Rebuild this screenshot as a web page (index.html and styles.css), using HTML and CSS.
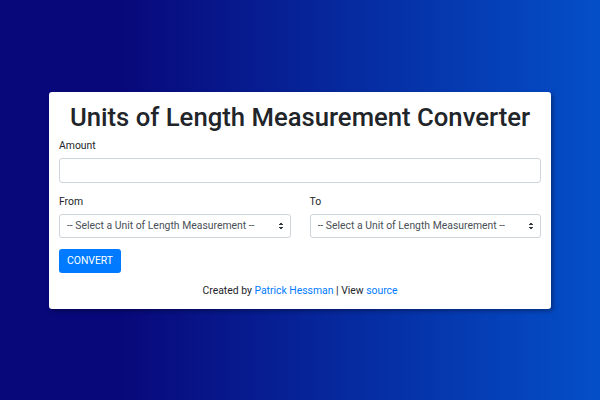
FILE: index.html
```html
<!DOCTYPE html>
<html lang="en">

<head>
    <meta charset="UTF-8">
    <meta name="viewport" content="width=device-width, initial-scale=1.0">
    <title>Units of Length Measurement Converter</title>
    <link rel="stylesheet" href="styles.css">
</head>

<body>
    <div class="card">
        <h1>Units of Length Measurement Converter</h1>
        <div class="field">
            <label for="amount">Amount</label>
            <input type="text" id="amount">
        </div>
        <div class="row">
            <div class="field">
                <label for="from">From</label>
                <div class="select-wrap">
                    <select id="from">
                        <option>-- Select a Unit of Length Measurement --</option>
                    </select>
                </div>
            </div>
            <div class="field">
                <label for="to">To</label>
                <div class="select-wrap">
                    <select id="to">
                        <option>-- Select a Unit of Length Measurement --</option>
                    </select>
                </div>
            </div>
        </div>
        <button class="convert">CONVERT</button>
        <p class="credits">Created by <a href="#">Patrick Hessman</a> | View <a href="#">source</a></p>
    </div>
</body>

</html>
```

FILE: styles.css
```css
body {
    background-image: linear-gradient(90deg, #08087a 20%, #044fc8);
    color: #212529;
    font-family: Roboto, "Liberation Sans", sans-serif;
    margin: 0;
    display: flex;
    align-items: center;
    justify-content: center;
    min-height: 100vh;
}

.card {
    width: 502px;
    box-sizing: border-box;
    background-color: #fff;
    padding: 8px 10px 10px;
    border-radius: 3px;
    box-shadow: 2px 2px 4px rgba(0, 0, 0, 0.35);
}

h1 {
    font-size: 25.7px;
    font-weight: 500;
    text-align: center;
    margin: 0 0 2px;
    line-height: 35px;
}

.field {
    display: flex;
    flex-direction: column;
    margin-bottom: 10px;
}

label {
    font-size: 10.4px;
    line-height: 16px;
    margin-top: 1px;
    margin-bottom: 4px;
}

input,
select {
    font-family: inherit;
    font-size: 10.4px;
    color: #495057;
    height: 25px;
    box-sizing: border-box;
    border: 1px solid #ced4da;
    border-radius: 3px;
    background-color: #fff;
    padding: 0 7px;
}

.row {
    display: grid;
    grid-template-columns: 1fr 1fr;
    column-gap: 19px;
}

.select-wrap {
    position: relative;
}

.select-wrap select {
    width: 100%;
    height: 24px;
    appearance: none;
    -webkit-appearance: none;
}

.select-wrap::after {
    content: "";
    position: absolute;
    right: 8px;
    top: 8px;
    width: 4px;
    height: 8px;
    background:
        linear-gradient(to bottom right, transparent 50%, #343a40 50%) left top / 2px 3px no-repeat,
        linear-gradient(to bottom left, transparent 50%, #343a40 50%) right top / 2px 3px no-repeat,
        linear-gradient(to top right, transparent 50%, #343a40 50%) left bottom / 2px 3px no-repeat,
        linear-gradient(to top left, transparent 50%, #343a40 50%) right bottom / 2px 3px no-repeat;
    pointer-events: none;
}

.convert {
    align-self: flex-start;
    font-family: inherit;
    font-size: 10.4px;
    color: #fff;
    background-color: #007bff;
    border: none;
    border-radius: 3px;
    height: 24px;
    padding: 0 8px;
    margin-top: 1px;
}

.credits {
    font-size: 10.4px;
    text-align: center;
    margin: 10px 0 0;
    line-height: 16px;
}

.credits a {
    color: #007bff;
    text-decoration: none;
}
```
